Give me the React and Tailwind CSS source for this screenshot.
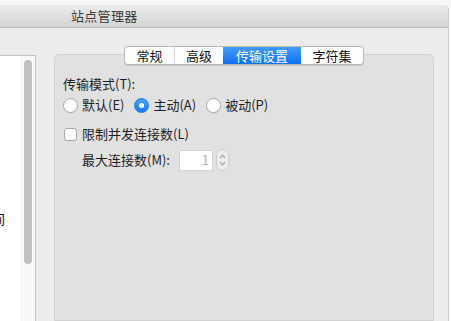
import React from 'react';

const font = { fontFamily: '"Noto Sans CJK SC", "Noto Sans", sans-serif' };

function Radio({ checked, label }) {
  return (
    <label className="flex items-center gap-[4px]">
      {checked ? (
        <span className="flex h-[15px] w-[15px] items-center justify-center rounded-full bg-gradient-to-b from-[#4aa3fd] to-[#1577f6] border border-[#1f78ee]">
          <span className="h-[5px] w-[5px] rounded-full bg-white" />
        </span>
      ) : (
        <span className="h-[15px] w-[15px] rounded-full border border-[#a9a9a9] bg-white shadow-[0_1px_0_rgba(0,0,0,0.05)]" />
      )}
      <span>{label}</span>
    </label>
  );
}

function Tabs() {
  const tabs = [
    { name: '常规', w: 'w-[49px]' },
    { name: '高级', w: 'w-[49px]' },
    { name: '传输设置', w: 'w-[78px]', active: true },
    { name: '字符集', w: 'w-[62px]' },
  ];
  return (
    <div className="relative z-10 flex justify-center">
      <div className="flex h-[19px] overflow-hidden rounded-[4px] border border-[#b9b9b9] bg-white shadow-[0_1px_1px_rgba(0,0,0,0.12)]">
        {tabs.map((t, i) => (
          <div
            key={t.name}
            className={`${t.w} flex items-center justify-center text-[13px] leading-none ${
              t.active
                ? 'bg-gradient-to-b from-[#3f9cfd] to-[#0b6ff5] text-white'
                : 'text-[#111]'
            } ${i > 0 && !t.active && !tabs[i - 1].active ? 'border-l border-[#d4d4d4]' : ''}`}
          >
            {t.name}
          </div>
        ))}
      </div>
    </div>
  );
}

export default function App() {
  return (
    <div className="h-[321px] w-[451px] overflow-hidden bg-[#f7f7f7] pt-[5px]" style={font}>
      <div className="flex h-full mr-[2px] flex-col overflow-hidden rounded-tr-[5px] border-r border-[#cdcdcd] bg-[#ececec]">
        {/* title bar */}
        <div className="flex h-[23px] shrink-0 items-center border-b border-[#b9b9b9] bg-gradient-to-b from-[#ececec] to-[#d4d4d4] pl-[71px] text-[13px] tracking-[0.3px] text-[#3a3a3a]">
          站点管理器
        </div>

        <div className="flex flex-1">
          {/* site list (clipped) */}
          <div className="mt-[27px] flex w-[36px] shrink-0 border-t border-r border-[#c3c3c3]">
            <div className="w-[21px] overflow-hidden bg-white pt-[155px] text-[13px] leading-[16px] text-[#111]">
              <div className="-ml-[8px] whitespace-nowrap">间</div>
            </div>
            <div className="w-[14px] border-l border-[#ededed] bg-[#f8f8f8] pt-[4px]">
              <div className="ml-[2px] h-[204px] w-[8px] rounded-full bg-[#c1c1c1]" />
            </div>
          </div>

          {/* right side */}
          <div className="ml-[18px] flex w-[380px] flex-col pt-[18px]">
            <Tabs />
            <div className="-mt-[11px] flex-1 rounded-t-[5px] border border-[#d2d2d2] bg-[#e1e1e1] pl-[8px] pt-[21px] text-[13px] leading-[16px] text-[#1e1e1e]">
              <div>传输模式(T):</div>
              <div className="mt-[5px] flex items-center gap-[10px]">
                <Radio label="默认(E)" />
                <Radio label="主动(A)" checked />
                <Radio label="被动(P)" />
              </div>
              <label className="mt-[13px] flex items-center gap-[5px] pl-[1px]">
                <span className="h-[13px] w-[13px] rounded-[3px] border border-[#a9a9a9] bg-white" />
                <span>限制并发连接数(L)</span>
              </label>
              <div className="mt-[7px] flex items-center pl-[19px]">
                <span>最大连接数(M):</span>
                <div className="ml-[9px] flex h-[21px] w-[34px] items-center justify-end border border-[#d3d3d3] bg-white pr-[3px] text-[#b3b3b3]">
                  1
                </div>
                <div className="ml-[3px] flex h-[22px] w-[13px] flex-col items-center justify-center rounded-[6px] border border-[#cfcfcf] bg-[#ececec]">
                  <svg width="7" height="5" viewBox="0 0 7 5" className="mb-[2px]">
                    <path d="M1 4 L3.5 1.2 L6 4" fill="none" stroke="#a6a6a6" strokeWidth="1.2" />
                  </svg>
                  <svg width="7" height="5" viewBox="0 0 7 5">
                    <path d="M1 1 L3.5 3.8 L6 1" fill="none" stroke="#a6a6a6" strokeWidth="1.2" />
                  </svg>
                </div>
              </div>
            </div>
          </div>
        </div>
      </div>
    </div>
  );
}
